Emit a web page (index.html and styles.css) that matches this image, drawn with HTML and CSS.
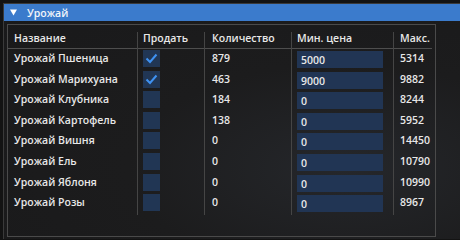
FILE: index.html
```html
<!DOCTYPE html>
<html>
<head>
<meta charset="utf-8">
<link rel="stylesheet" href="styles.css">
</head>
<body>
<div class="window">
  <div class="title">
    <svg class="tri" width="7" height="7" viewBox="0 0 7 7"><polygon points="0,0.5 7,0.5 3.5,6.5" fill="#ffffff"/></svg>
    <span>Урожай</span>
  </div>
  <div class="frame">
    <div class="cols">
      <div class="col c1">
        <div class="head">Название</div>
        <div class="cell">Урожай Пшеница</div>
        <div class="cell">Урожай Марихуана</div>
        <div class="cell">Урожай Клубника</div>
        <div class="cell">Урожай Картофель</div>
        <div class="cell">Урожай Вишня</div>
        <div class="cell">Урожай Ель</div>
        <div class="cell">Урожай Яблоня</div>
        <div class="cell">Урожай Розы</div>
      </div>
      <div class="col c2">
        <div class="head">Продать</div>
        <div class="cell"><div class="box"><svg width="17" height="17" viewBox="0 0 17 17"><polyline points="3.5,8.5 7,12 13.5,4.5" fill="none" stroke="#3f92f2" stroke-width="2"/></svg></div></div>
        <div class="cell"><div class="box"><svg width="17" height="17" viewBox="0 0 17 17"><polyline points="3.5,8.5 7,12 13.5,4.5" fill="none" stroke="#3f92f2" stroke-width="2"/></svg></div></div>
        <div class="cell"><div class="box"></div></div>
        <div class="cell"><div class="box"></div></div>
        <div class="cell"><div class="box"></div></div>
        <div class="cell"><div class="box"></div></div>
        <div class="cell"><div class="box"></div></div>
        <div class="cell"><div class="box"></div></div>
      </div>
      <div class="col c3">
        <div class="head">Количество</div>
        <div class="cell">879</div>
        <div class="cell">463</div>
        <div class="cell">184</div>
        <div class="cell">138</div>
        <div class="cell">0</div>
        <div class="cell">0</div>
        <div class="cell">0</div>
        <div class="cell">0</div>
      </div>
      <div class="col c4">
        <div class="head">Мин. цена</div>
        <div class="cell"><div class="input">5000</div></div>
        <div class="cell"><div class="input">9000</div></div>
        <div class="cell"><div class="input">0</div></div>
        <div class="cell"><div class="input">0</div></div>
        <div class="cell"><div class="input">0</div></div>
        <div class="cell"><div class="input">0</div></div>
        <div class="cell"><div class="input">0</div></div>
        <div class="cell"><div class="input">0</div></div>
      </div>
      <div class="col c5">
        <div class="head">Макс.</div>
        <div class="cell">5314</div>
        <div class="cell">9882</div>
        <div class="cell">8244</div>
        <div class="cell">5952</div>
        <div class="cell">14450</div>
        <div class="cell">10790</div>
        <div class="cell">10990</div>
        <div class="cell">8967</div>
      </div>
    </div>
  </div>
</div>
</body>
</html>
```
FILE: styles.css
```css
html, body {
  margin: 0;
  padding: 0;
}
body {
  width: 460px;
  height: 240px;
  overflow: hidden;
  background: #131313;
  font-family: "Open Sans", "DejaVu Sans", sans-serif;
  font-weight: 600;
  font-size: 10.5px;
  color: #e8e8e8;
}
.window {
  margin: 3px 0 0 3px;
  height: 236px;
  border-top: 1px solid #3a3a3a;
  border-left: 1px solid #3a3a3a;
  box-sizing: border-box;
  background: radial-gradient(ellipse at 75% 70%, #25272b 0%, #1c1c1d 45%, #19191a 100%);
  overflow: hidden;
}
.title {
  height: 17px;
  background: #3b7bcc;
  display: flex;
  align-items: center;
  padding-left: 6px;
  gap: 10px;
  font-size: 10.5px;
  color: #f2f5fa;
}
.tri {
  display: block;
}
.frame {
  margin: 3px 0 0 3px;
  width: 429px;
  height: 213px;
  box-sizing: border-box;
  border: 1px solid #4a4a4a;
  padding-top: 7px;
}
.cols {
  display: flex;
}
.col {
  box-sizing: border-box;
  display: flex;
  flex-direction: column;
  padding-bottom: 1px;
}
.c1 { width: 129px; padding-left: 6px; }
.c2 { width: 67px; border-left: 1px solid #454545; padding-left: 5px; }
.c3 { width: 87px; border-left: 1px solid #454545; padding-left: 7px; }
.c4 { width: 102px; border-left: 1px solid #454545; padding-left: 5px; }
.c5 { width: 42px; border-left: 1px solid #454545; padding-left: 6px; }
.head {
  height: 17px;
  box-sizing: border-box;
  line-height: 13px;
  border-bottom: 1px solid #4e4e4e;
  margin-left: -7px;
  padding-left: 7px;
  white-space: nowrap;
}
.c1 .head { margin-left: -6px; padding-left: 6px; }
.c2 .head { margin-left: -5px; padding-left: 5px; }
.c4 .head { margin-left: -5px; padding-left: 5px; }
.c5 .head { margin-left: -6px; padding-left: 6px; margin-right: 3px; }
.cell {
  height: 20.6px;
  box-sizing: border-box;
  padding-top: 2px;
  line-height: 14px;
  white-space: nowrap;
}
.c2 .cell { padding-top: 1px; }
.c4 .cell { padding-top: 2px; }
.box {
  width: 17px;
  height: 17px;
  background: #213654;
}
.box svg {
  display: block;
}
.input {
  width: 86px;
  height: 17px;
  background: #213554;
  line-height: 18px;
  padding-left: 4px;
  box-sizing: border-box;
}
```
